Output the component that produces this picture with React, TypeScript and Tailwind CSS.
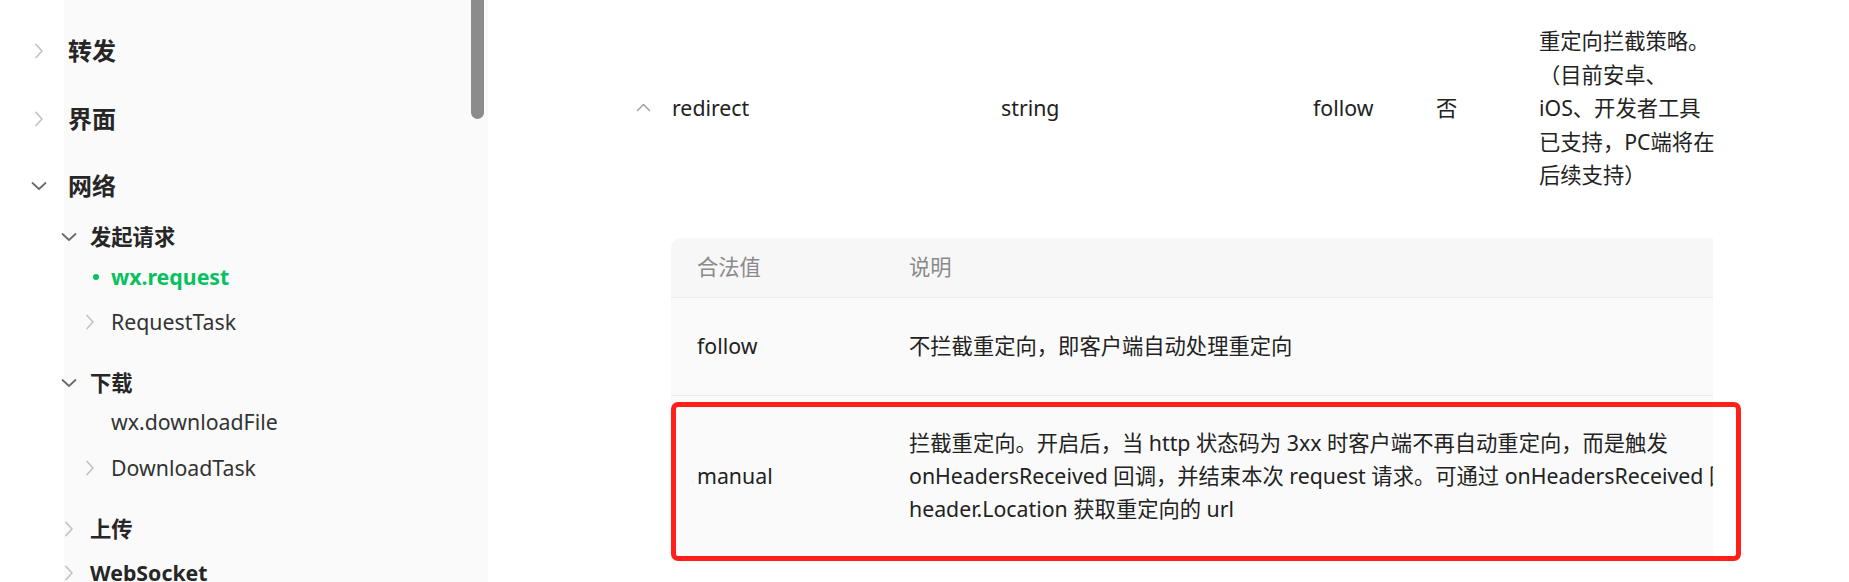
import type { ReactNode } from 'react';

type NavIcon = 'right' | 'down' | 'dot' | 'none';

type NavRow = {
  label: string;
  level: 0 | 1 | 2;
  icon: NavIcon;
  mt: number;
  active?: boolean;
};

// Sidebar rows, top to bottom (mt = gap above the 34px row)
const navRows: NavRow[] = [
  { label: '转发', level: 0, icon: 'right', mt: 34 },
  { label: '界面', level: 0, icon: 'right', mt: 34 },
  { label: '网络', level: 0, icon: 'down', mt: 33 },
  { label: '发起请求', level: 1, icon: 'down', mt: 17 },
  { label: 'wx.request', level: 2, icon: 'dot', mt: 6, active: true },
  { label: 'RequestTask', level: 2, icon: 'right', mt: 11 },
  { label: '下载', level: 1, icon: 'down', mt: 27 },
  { label: 'wx.downloadFile', level: 2, icon: 'none', mt: 5 },
  { label: 'DownloadTask', level: 2, icon: 'right', mt: 12 },
  { label: '上传', level: 1, icon: 'right', mt: 27 },
  { label: 'WebSocket', level: 1, icon: 'right', mt: 10 },
];

function ChevronRight() {
  return (
    <svg width="10" height="16" viewBox="0 0 10 16" fill="none">
      <path d="M2 1.5 L8 8 L2 14.5" stroke="#c4c4c4" strokeWidth="1.8" strokeLinecap="round" strokeLinejoin="round" />
    </svg>
  );
}

function ChevronDown({ color = '#6b6b6b' }: { color?: string }) {
  return (
    <svg width="16" height="10" viewBox="0 0 16 10" fill="none">
      <path d="M1.5 2 L8 8 L14.5 2" stroke={color} strokeWidth="1.8" strokeLinecap="round" strokeLinejoin="round" />
    </svg>
  );
}

function ChevronUp() {
  return (
    <svg width="15" height="9" viewBox="0 0 15 9" fill="none">
      <path d="M1.5 7.5 L7.5 1.5 L13.5 7.5" stroke="#9a9a9a" strokeWidth="1.4" strokeLinecap="round" strokeLinejoin="round" />
    </svg>
  );
}

function NavIconBox({ icon }: { icon: NavIcon }) {
  let content: ReactNode = null;
  if (icon === 'right') content = <ChevronRight />;
  if (icon === 'down') content = <ChevronDown />;
  if (icon === 'dot') content = <span className="ml-[14px] block h-[6px] w-[6px] rounded-full bg-[#07c160]" />;
  return (
    <div className={icon === 'dot' ? 'flex w-[22px] items-center' : 'flex w-[22px] items-center justify-center'}>
      {content}
    </div>
  );
}

function Sidebar() {
  return (
    <div className="relative h-full w-[488px] shrink-0 bg-[linear-gradient(to_right,#ffffff_64px,#fafafa_64px)]">
      {navRows.map(row => {
        const pad = row.level === 0 ? 'pl-[28px]' : row.level === 1 ? 'pl-[58px]' : 'pl-[79px]';
        const gap = row.level === 0 ? 'ml-[18px]' : 'ml-[10px]';
        let text = 'text-[21.3px] text-[#333333]';
        if (row.level === 0) text = 'text-[24px] font-bold text-[#262626]';
        if (row.level === 1) text = 'text-[21.3px] font-bold text-[#262626]';
        if (row.active) text = 'text-[21.3px] font-bold text-[#07c160]';
        return (
          <div key={row.label} className={`flex h-[34px] items-center ${pad}`} style={{ marginTop: row.mt }}>
            <NavIconBox icon={row.icon} />
            <span className={`${gap} ${text} whitespace-nowrap`}>{row.label}</span>
          </div>
        );
      })}
      {/* scrollbar thumb */}
      <div className="absolute left-[471px] top-0 h-[119px] w-[13px] rounded-b-full bg-[#8c8c8c]" />
    </div>
  );
}

function ValueTable() {
  return (
    <div className="ml-[51px] mt-[46px] w-[1042px] overflow-hidden rounded-tl-[10px] rounded-bl-[10px]">
      <div className="w-[1400px]">
        <div className="flex h-[60px] items-center border-b border-[#ececec] bg-[#f7f7f7] text-[#8a8a8a]">
          <div className="w-[212px] pl-[26px]">合法值</div>
          <div className="pl-[26px]">说明</div>
        </div>
        <div className="flex h-[98px] items-center border-b border-[#ececec] bg-[#fafafa] text-[#222222]">
          <div className="w-[212px] pl-[26px]">follow</div>
          <div className="pl-[26px]">不拦截重定向，即客户端自动处理重定向</div>
        </div>
        <div className="flex h-[160px] items-center bg-[#fafafa] text-[#222222]">
          <div className="w-[212px] pl-[26px]">manual</div>
          <div className="pl-[26px] leading-[33px] whitespace-nowrap">
            <div>拦截重定向。开启后，当 http 状态码为 3xx 时客户端不再自动重定向，而是触发</div>
            <div>onHeadersReceived 回调，并结束本次 request 请求。可通过 onHeadersReceived 回调的</div>
            <div>header.Location 获取重定向的 url</div>
          </div>
        </div>
      </div>
    </div>
  );
}

export default function App() {
  return (
    <div className="flex h-[582px] w-[1849px] overflow-hidden bg-white font-['Noto_Sans','Noto_Sans_CJK_SC',sans-serif]">
      <Sidebar />
      <div className="relative flex-1 pl-[132px] text-[21.3px] text-[#222222]">
        {/* redirect param row */}
        <div className="flex items-center pt-[24px]">
          <div className="flex w-[52px] items-center">
            <div className="ml-[16px]">
              <ChevronUp />
            </div>
          </div>
          <div className="w-[329px]">redirect</div>
          <div className="w-[312px]">string</div>
          <div className="w-[123px]">follow</div>
          <div className="w-[103px]">否</div>
          <div className="w-[200px] leading-[33.5px] whitespace-nowrap">
            <div>重定向拦截策略。</div>
            <div>（目前安卓、</div>
            <div>iOS、开发者工具</div>
            <div>已支持，PC端将在</div>
            <div>后续支持）</div>
          </div>
        </div>

        <ValueTable />

        {/* red highlight box */}
        <div className="absolute left-[183px] top-[402px] h-[159px] w-[1070px] rounded-[7px] border-[5px] border-[#ff2119]" />
      </div>
    </div>
  );
}
